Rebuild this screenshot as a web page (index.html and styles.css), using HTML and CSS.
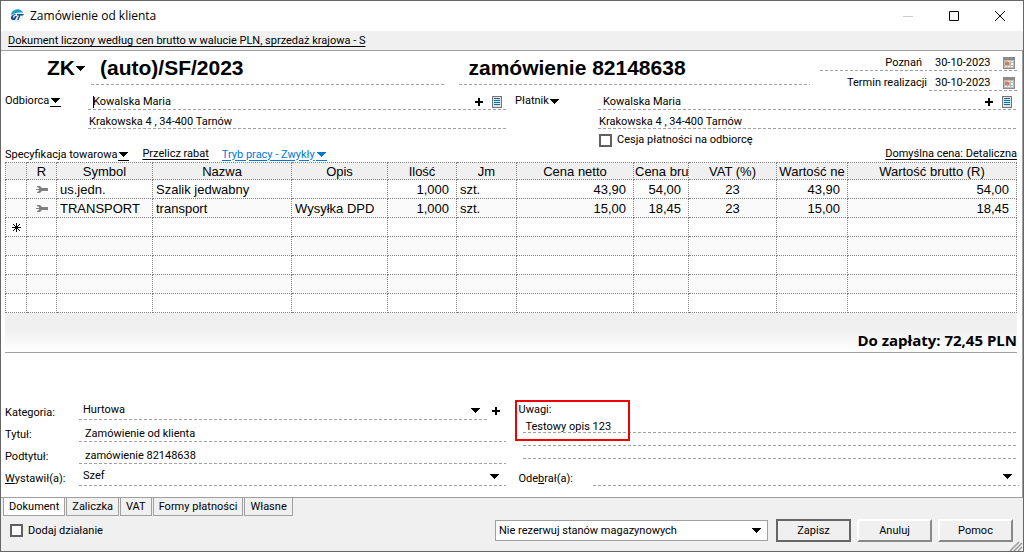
FILE: index.html
```html
<!DOCTYPE html>
<html lang="pl">
<head>
  <meta charset="UTF-8">
  <meta name="viewport" content="width=device-width, initial-scale=1.0">
  <title>Zamówienie od klienta</title>
  <link rel="stylesheet" href="styles.css">
</head>
<body>
  <!-- shared icons -->
  <svg class="defs" width="0" height="0">
    <symbol id="i-arrow" viewBox="0 0 9 5"><path d="M0 0h9v1h-1v1h-1v1h-1v1h-1v1h-1v-1h-1v-1h-1v-1h-1v-1h-1z"/></symbol>
    <symbol id="i-plus" viewBox="0 0 8 8"><path d="M3 0h2v3h3v2h-3v3h-2v-3h-3v-2h3z"/></symbol>
    <symbol id="i-list" viewBox="0 0 10 12"><path fill="#777" d="M0 0h10v12h-10z"/><path fill="#d8e4ea" d="M1 1h8v10h-8z"/><path fill="#0f7096" d="M2 2h6v1h-6zM2 4h6v1h-6zM2 6h6v1h-6zM2 8h6v1h-6z"/></symbol>
    <symbol id="i-cal" viewBox="0 0 12 12"><path fill="#8c8c8c" d="M0 0h12v12h-12z"/><path fill="#bcbcbc" d="M1 3h10v8h-10z"/><path fill="#eee" d="M5 4h2v1h-2zM8 4h2v1h-2zM8 6h2v2h-2zM2 9h2v1h-2zM5 9h2v1h-2zM8 9h2v1h-2z"/><path fill="#e0784f" d="M2 5h4v3h-4z"/></symbol>
    <symbol id="i-wrench" viewBox="0 0 12 7"><path fill="#808080" d="M1 0h3l2 2h6v3h-6l-2 2h-3v-1l2-1v-1h-3v-1h3v-1l-2-1z"/></symbol>
  </svg>

  <div class="window">
    <header class="titlebar">
      <svg class="logo" width="14" height="14" viewBox="0 0 14 14"><circle cx="7" cy="7" r="6.500" fill="#e4f1f7"/><path d="M1 6a6.300 6.300 0 0 1 12-2c-4-1-8 0-12 2z" fill="#16a0d0"/><path d="M1 9c0-3 3-4 5-4l-1 1c-2 0-2.500 3-1 3l1-2h2l-2 4c-3 0-4 0-4-2zM7 5h7l-1 1.500h-2.500L8.500 11H7l2-4.500H7z" fill="#1b4d80"/></svg>
      <h1>Zamówienie od klienta</h1>
      <button class="win-btn" aria-label="Minimalizuj"><svg width="10" height="10"><path d="M0 5.500h10" stroke="#ccc"/></svg></button>
      <button class="win-btn" aria-label="Maksymalizuj"><svg width="10" height="10"><path d="M.5.5h9v9h-9z" fill="none" stroke="#000"/></svg></button>
      <button class="win-btn" aria-label="Zamknij"><svg width="10" height="10"><path d="M0 0l10 10M10 0l-10 10" stroke="#000"/></svg></button>
    </header>

    <div class="infobar"><a href="#">Dokument liczony według cen brutto w walucie PLN, sprzedaż krajowa - S</a></div>

    <main class="panel">
      <!-- document number and dates -->
      <section class="doc-head">
        <button class="doc-type">ZK<svg width="9" height="5"><use href="#i-arrow"/></svg></button>
        <input class="line doc-number" aria-label="Numer" value="(auto)/SF/2023">
        <input class="line doc-original" aria-label="Numer oryginału" value="zamówienie 82148638">
        <div class="dates">
          <label class="date-label line" for="date-issue">Poznań</label>
          <div class="date line"><input id="date-issue" value="30-10-2023"><button aria-label="Kalendarz"><svg width="12" height="12"><use href="#i-cal"/></svg></button></div>
          <label class="date-label" for="date-due">Termin realizacji</label>
          <div class="date line"><input id="date-due" value="30-10-2023"><button aria-label="Kalendarz"><svg width="12" height="12"><use href="#i-cal"/></svg></button></div>
        </div>
      </section>

      <!-- recipient and payer -->
      <section class="parties">
        <div class="party">
          <button class="party-name">Odbiorca<span class="drop"><svg width="9" height="5"><use href="#i-arrow"/></svg></span></button>
          <div class="party-data">
            <div class="line party-row">
              <span class="caret"></span><input class="grow" aria-label="Odbiorca" value="Kowalska Maria">
              <button aria-label="Dodaj"><svg width="8" height="8"><use href="#i-plus"/></svg></button>
              <button aria-label="Lista"><svg width="10" height="12"><use href="#i-list"/></svg></button>
            </div>
            <div class="line party-address">Krakowska 4 , 34-400 Tarnów</div>
          </div>
        </div>
        <div class="party">
          <button class="party-name">Płatnik<svg width="9" height="5"><use href="#i-arrow"/></svg></button>
          <div class="party-data">
            <div class="line party-row">
              <input class="grow" aria-label="Płatnik" value="Kowalska Maria">
              <button aria-label="Dodaj"><svg width="8" height="8"><use href="#i-plus"/></svg></button>
              <button aria-label="Lista"><svg width="10" height="12"><use href="#i-list"/></svg></button>
            </div>
            <div class="line party-address">Krakowska 4 , 34-400 Tarnów</div>
            <label class="check"><input type="checkbox">Cesja płatności na odbiorcę</label>
          </div>
        </div>
      </section>

      <nav class="grid-links">
        <button>Specyfikacja towarowa<span class="drop"><svg width="9" height="5"><use href="#i-arrow"/></svg></span></button>
        <a href="#">Przelicz rabat</a>
        <button class="mode">Tryb pracy - Zwykły<span class="drop"><svg width="9" height="5"><use href="#i-arrow"/></svg></span></button>
        <a class="price" href="#">Domyślna cena: Detaliczna</a>
      </nav>

      <div class="grid">
        <table class="items">
          <colgroup>
            <col class="c-mark"><col class="c-r"><col class="c-symbol"><col class="c-name"><col class="c-symbol"><col class="c-qty">
            <col class="c-unit"><col class="c-net"><col class="c-gross"><col class="c-vat"><col class="c-value"><col>
          </colgroup>
          <thead>
            <tr><th></th><th>R</th><th>Symbol</th><th>Nazwa</th><th>Opis</th><th>Ilość</th><th>Jm</th><th>Cena netto</th><th>Cena bru</th><th>VAT (%)</th><th>Wartość ne</th><th>Wartość brutto (R)</th></tr>
          </thead>
          <tbody>
            <tr><td></td><td class="mid"><svg width="12" height="7"><use href="#i-wrench"/></svg></td><td>us.jedn.</td><td>Szalik jedwabny</td><td></td><td class="num">1,000</td><td>szt.</td><td class="num">43,90</td><td class="num">54,00</td><td class="mid">23</td><td class="num">43,90</td><td class="num">54,00</td></tr>
            <tr><td></td><td class="mid"><svg width="12" height="7"><use href="#i-wrench"/></svg></td><td>TRANSPORT</td><td>transport</td><td>Wysyłka DPD</td><td class="num">1,000</td><td>szt.</td><td class="num">15,00</td><td class="num">18,45</td><td class="mid">23</td><td class="num">15,00</td><td class="num">18,45</td></tr>
            <tr><td class="mid"><svg width="9" height="9" viewBox="0 0 9 9"><path d="M4.500 0v9M0 4.500h9M1 1l7 7M8 1l-7 7" stroke="#000"/></svg></td><td></td><td></td><td></td><td></td><td></td><td></td><td></td><td></td><td></td><td></td><td></td></tr>
            <tr><td></td><td></td><td></td><td></td><td></td><td></td><td></td><td></td><td></td><td></td><td></td><td></td></tr>
            <tr><td></td><td></td><td></td><td></td><td></td><td></td><td></td><td></td><td></td><td></td><td></td><td></td></tr>
            <tr><td></td><td></td><td></td><td></td><td></td><td></td><td></td><td></td><td></td><td></td><td></td><td></td></tr>
            <tr><td></td><td></td><td></td><td></td><td></td><td></td><td></td><td></td><td></td><td></td><td></td><td></td></tr>
          </tbody>
        </table>
        <div class="total">Do zapłaty: 72,45 PLN</div>
      </div>

      <!-- document details -->
      <section class="details">
        <div class="details-col">
          <div class="field">
            <label for="category">Kategoria:</label>
            <div class="line select grow"><select id="category"><option>Hurtowa</option></select><svg width="9" height="5"><use href="#i-arrow"/></svg></div>
            <button class="add" aria-label="Dodaj kategorię"><svg width="8" height="8"><use href="#i-plus"/></svg></button>
          </div>
          <div class="field"><label for="title">Tytuł:</label><input class="line grow" id="title" value="Zamówienie od klienta"></div>
          <div class="field"><label for="subtitle">Podtytuł:</label><input class="line grow" id="subtitle" value="zamówienie 82148638"></div>
          <div class="field">
            <label for="issuer"><u>W</u>ystawił(a):</label>
            <div class="line select grow"><select id="issuer"><option>Szef</option></select><svg width="9" height="5"><use href="#i-arrow"/></svg></div>
          </div>
        </div>
        <div class="details-col">
          <div class="notes">
            <label for="notes">Uwagi:</label>
            <textarea id="notes" rows="3">Testowy opis 123</textarea>
            <span class="highlight"></span>
          </div>
          <div class="field">
            <label for="receiver">Ode<u>b</u>rał(a):</label>
            <div class="line select grow"><select id="receiver"><option></option></select><svg width="9" height="5"><use href="#i-arrow"/></svg></div>
          </div>
        </div>
      </section>
    </main>

    <nav class="tabs">
      <button class="active">Dokument</button><button>Zaliczka</button><button>VAT</button><button>Formy płatności</button><button>Własne</button>
    </nav>

    <footer class="actions">
      <label class="check"><input type="checkbox">Dodaj działanie</label>
      <div class="select reserve"><select aria-label="Rezerwacja"><option>Nie rezerwuj stanów magazynowych</option></select><svg width="9" height="5"><use href="#i-arrow"/></svg></div>
      <button class="btn default">Zapisz</button>
      <button class="btn">Anuluj</button>
      <button class="btn">Pomoc</button>
      <svg class="grip" width="14" height="10"><path d="M1 10l9-9M5 10l8-8M9 10l4-4" stroke="#999" stroke-width="1.500"/></svg>
    </footer>
  </div>
</body>
</html>
```
FILE: styles.css
```css
* { margin: 0; padding: 0; box-sizing: border-box; }
body {
  font-family: Tahoma, Roboto, "Noto Sans", sans-serif;
  font-size: 11px;
  line-height: 14px;
  color: #000;
}
button, input, select, textarea {
  font: inherit;
  color: inherit;
  background: none;
  border: none;
  outline: none;
  border-radius: 0;
  min-width: 0;
}
select { appearance: none; width: 100%; }
textarea { resize: none; display: block; overflow: hidden; }
svg { display: block; flex: none; }
a { color: inherit; text-underline-offset: 2px; }
.defs { position: absolute; }
.grow { flex: 1; }

/* dashed underline of the editable fields */
.line { background: linear-gradient(90deg, #a0a0a0 3px, transparent 3px) 0 100% / 5px 1px repeat-x; }

.window {
  display: flex;
  flex-direction: column;
  min-height: 100vh;
  background: #f0f0f0;
  border: 1px solid #666;
}

/* title bar */
.titlebar {
  display: flex;
  align-items: center;
  height: 30px;
  padding-left: 9px;
  background: #fff;
}
.titlebar h1 { flex: 1; margin-left: 6px; font: 12px/16px "Segoe UI", "Open Sans", sans-serif; }
.win-btn { width: 46px; height: 30px; display: flex; align-items: center; justify-content: center; }

.infobar { height: 19px; padding: 3px 7px 0; }

/* main panel */
.panel {
  flex: 1;
  padding: 0 3px 0 4px;
  background: #fff;
  border: 1px solid #a0a0a0;
  border-left: none;
}

.doc-head { display: flex; align-items: flex-start; }
.doc-type, .doc-number, .doc-original { height: 34px; font: bold 21px/24px "Liberation Sans", Arial, sans-serif; }
.doc-type { display: flex; align-items: center; gap: 1px; width: 86px; padding-left: 42px; }
.doc-number { flex: 355; padding-left: 9px; }
.doc-original { flex: 351; margin-left: 14px; padding-left: 9px; }
.dates {
  display: grid;
  grid-template-columns: 107px 90px;
  column-gap: 2px;
  margin-left: 10px;
}
.date-label { height: 20px; padding-top: 5px; text-align: right; }
.date-label.line { padding-right: 5px; }
.date { display: flex; align-items: center; justify-content: space-between; height: 20px; padding: 4px 4px 0 6px; }
.date input { width: 64px; }

.parties { display: flex; gap: 8px; padding-right: 2px; }
.party { display: flex; flex: 1; align-items: flex-start; }
.party-name { display: flex; align-items: center; gap: 1px; width: 83px; padding-top: 3px; }
.party-data { flex: 1; }
.party-row { display: flex; align-items: center; gap: 9px; height: 19px; padding: 3px 5px 0; }
.party-address { height: 19px; padding: 5px 1px 0; }
.caret { width: 1px; height: 12px; margin-right: -10px; background: #000; }
.drop { padding: 3px 1px; border-bottom: 1px solid; }

.check { display: flex; align-items: center; gap: 5px; }
.check input { appearance: none; width: 13px; height: 13px; background: #fff; border: 2px solid #606060; }
.party .check { padding: 4px 1px 0; }

/* links over the grid */
.grid-links { display: flex; height: 15px; gap: 13px; padding-right: 2px; }
.grid-links button { display: flex; align-items: center; gap: 1px; }
.mode { color: #0078d7; fill: #0078d7; text-decoration: underline; text-underline-offset: 2px; }
.price { margin-left: auto; }

/* items grid */
.grid { padding-right: 2px; }
.items {
  width: 100%;
  table-layout: fixed;
  border-collapse: collapse;
  font: 13px/15px "Liberation Sans", Arial, sans-serif;
}
.items th, .items td { border: 1px dotted #808080; height: 19px; padding: 0 3px; white-space: nowrap; overflow: hidden; }
.items th { height: 17px; padding: 0 1px; font-weight: normal; background: #f0f0f0; }
.items tbody tr:nth-child(even) { background: #fafafa; }
.items .num { text-align: right; padding-right: 7px; }
.items .mid { text-align: center; }
.items .mid svg { margin: 0 auto; }
.c-mark { width: 21px; }
.c-r { width: 30px; }
.c-symbol { width: 96px; }
.c-name { width: 139px; }
.c-qty { width: 69px; }
.c-unit { width: 60px; }
.c-net { width: 117px; }
.c-gross { width: 55px; }
.c-vat { width: 88px; }
.c-value { width: 71px; }

.total {
  height: 40px;
  padding-top: 17px;
  text-align: right;
  font: bold 15px/20px "Segoe UI", "Open Sans", sans-serif;
  background: linear-gradient(#f0f0f0 40%, #fff);
  border-bottom: 1px solid #a0a0a0;
}

/* details form */
.details { display: flex; gap: 13px; padding-top: 45px; }
.details-col { flex: 1; }
.field { display: flex; align-items: flex-end; height: 22px; }
.field label { width: 74px; }
.field input { padding: 2px 6px 0; height: 20px; }
.select { display: flex; align-items: center; }
.field .select { height: 20px; padding: 0 7px 0 4px; }
.field .add { margin-left: 5px; padding: 0 6px 5px 0; }
.notes { position: relative; height: 66px; padding-top: 5px; }
.notes label { display: block; }
.notes textarea {
  width: calc(100% - 6px);
  height: 39px;
  margin: 3px 0 0 4px;
  padding: 0 3px;
  line-height: 13px;
  background:
    linear-gradient(#fff 12px, transparent 12px) 0 0 / 100% 13px,
    linear-gradient(90deg, #a0a0a0 3px, transparent 3px) 0 0 / 5px 13px;
}
.highlight { position: absolute; left: -4px; top: 2px; width: 115px; height: 41px; border: 2px solid #f00000; }

/* bottom tabs */
.tabs { display: flex; gap: 1px; padding-left: 2px; }
.tabs button { height: 18px; padding: 0 5px; border: 1px solid #a0a0a0; border-top: none; }
.tabs .active { background: #fff; }

.actions { position: relative; display: flex; align-items: center; gap: 6px; height: 35px; padding: 0 10px 6px 9px; }
.actions .check { margin-right: auto; }
.reserve { width: 273px; height: 21px; margin-right: 2px; padding: 0 6px 0 3px; background: #fff; border: 1px solid #a0a0a0; }
.btn {
  width: 75px;
  height: 23px;
  border: 2px solid;
  border-color: #fff #888 #888 #fff;
}
.btn.default { border-color: #666; }
.grip { position: absolute; right: 0; bottom: 0; }
```
